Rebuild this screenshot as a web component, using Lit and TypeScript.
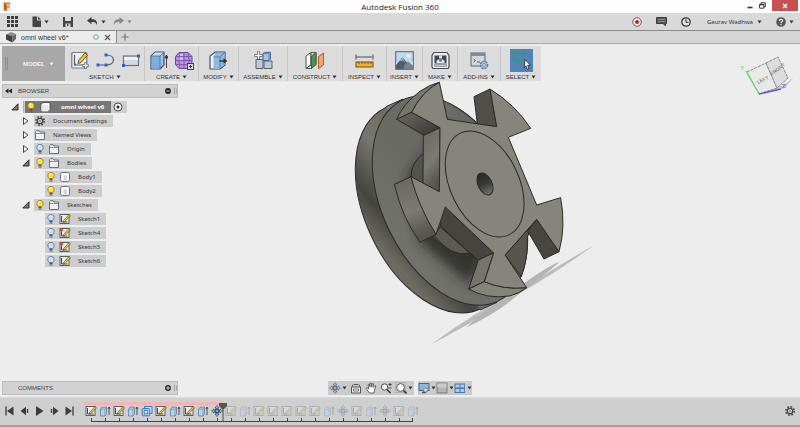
import { LitElement, html, css, svg, nothing, TemplateResult } from "lit";
import { customElement, property } from "lit/decorators.js";
import { classMap } from "lit/directives/class-map.js";

type Glyph = { w: number; h: number; art: TemplateResult };

const sketchSmall = svg`<rect x="1" y="1.500" width="9" height="9" fill="#e9eef3" stroke="#59626b"/><path d="M2.500 3v6h6" fill="none" stroke="#3c4c60"/><path d="M4.500 7.500L10 1.500l1.500 1.300L6 8.500 4 9z" fill="#f3bd2c" stroke="#54431a" stroke-width="0.600"/>`;

const extrudeSmall = svg`<path d="M1.500 4.200l1.500-2h4.500v7L6 11H1.500z" fill="#b7d2ee" stroke="#5f7fa3" stroke-width="0.800"/><path d="M1.500 4.200H6V11M6 4.200l1.500-2" fill="none" stroke="#5f7fa3" stroke-width="0.600"/><path d="M10 10V2.500M9 4l1-2 1 2" fill="none" stroke="#444" stroke-width="0.900"/>`;

const moveSmall = (line: string, core: string) => svg`<path d="M6 .500l2 2.500H4zM6 11.500L4 9h4zM.500 6L3 4v4zM11.500 6L9 8V4z" fill="#e6eef7" stroke="${line}" stroke-width="0.800"/><path d="M6 3v6M3 6h6" stroke="${line}" stroke-width="0.800"/><rect x="4.300" y="4.300" width="3.400" height="3.400" fill="${core}" stroke="${line}" stroke-width="0.800"/>`;

const bulb = (fill: string, line: string) => svg`<path d="M4.200 7.500C2 5.500 2.500 1.500 6 1.500s4 4 1.800 6z" fill="${fill}" stroke="${line}" stroke-width="0.900"/><path d="M4.500 8.500h3M4.500 10h3" stroke="#555" stroke-width="1"/><path d="M4.500 4q.300-1.300 1.400-1.500" stroke="#fff" fill="none" stroke-width="0.800"/>`;

const glyphs: Record<string, Glyph> = {
  logo: { w: 9, h: 9, art: svg`<rect width="9" height="9" fill="#d4e9f2"/><path d="M2 .500h6v2H4.500v1.300h3v2h-3V9H2z" fill="#e88a1d"/><path d="M2 .500l2.500 2V9L2 7z" fill="#b65d12"/>` },
  grid: { w: 11, h: 11, art: svg`${[0, 4, 8].map(y => [0, 4, 8].map(x => svg`<rect x="${x}" y="${y}" width="3" height="3" fill="#3e3e3e"/>`))}` },
  file: { w: 9, h: 11, art: svg`<path d="M.500.500H5v4h4V11H.500z" fill="#444"/><path d="M6 .500L9 3.500H6z" fill="#444"/>` },
  save: { w: 10, h: 11, art: svg`<path d="M0 1h10v10H0z" fill="#444"/><path d="M2 1h6v4H2zM2.500 7.500h5V11h-5z" fill="#d9d9d9"/><path d="M4 8h1.500v2H4z" fill="#444"/>` },
  undo: { w: 11, h: 9, art: svg`<path d="M0 3.500L4.500 0v2.300C8.500 2.300 10.500 4 10 8 9 5.500 7.500 5 4.500 5v2.200z" fill="#3f3f3f"/>` },
  redo: { w: 11, h: 9, art: svg`<path d="M11 3.500L6.500 0v2.300C2.500 2.300.500 4 1 8 2 5.500 3.500 5 6.500 5v2.200z" fill="#888"/>` },
  record: { w: 10, h: 10, art: svg`<circle cx="5" cy="5" r="4.200" fill="#fff" stroke="#444" stroke-width="0.900"/><circle cx="5" cy="5" r="2" fill="#e01010"/>` },
  chat: { w: 11, h: 9, art: svg`<path d="M.500.500h10v6h-1v2.300L7 6.500H.500z" fill="#555" stroke="#3d3d3d"/><path d="M2 2.500h7M2 4.500h7" stroke="#999" stroke-width="0.800"/>` },
  clock: { w: 10, h: 10, art: svg`<circle cx="5" cy="5" r="4.200" fill="#e4e4e4" stroke="#3b3b3b" stroke-width="1.300"/><path d="M5 2.200V5.300h2.500" fill="none" stroke="#333"/>` },
  help: { w: 10, h: 10, art: svg`<circle cx="5" cy="5" r="4.800" fill="#555"/><path d="M3.400 4C3.400 1.800 6.600 1.800 6.600 3.800 6.600 4.900 5 4.900 5 6.200M5 7v1.200" fill="none" stroke="#eee" stroke-width="1.200"/>` },
  cube: { w: 10, h: 11, art: svg`<path d="M0 2.500L5 0l5 2-3.500 2z" fill="#8b8b8b"/><path d="M0 2.500L6.500 4v6.500L0 7.500z" fill="#404040"/><path d="M6.500 4L10 2v5l-3.500 3.500z" fill="#666"/>` },
  ring: { w: 6, h: 6, art: svg`<circle cx="3" cy="3" r="2.300" fill="none" stroke="#55b8ac"/>` },
  close: { w: 7, h: 7, art: svg`<path d="M1 1l5 5M6 1L1 6" stroke="#555" stroke-width="1.200"/>` },
  closeWhite: { w: 6, h: 6, art: svg`<path d="M1 1l4 4M5 1L1 5" stroke="#fff" stroke-width="1.400"/>` },
  plus: { w: 8, h: 8, art: svg`<path d="M4 .500v7M.500 4h7" stroke="#777" stroke-width="1.200"/>` },
  minimise: { w: 6, h: 6, art: svg`<path d="M.500 4.500h5" stroke="#333" stroke-width="1.600"/>` },
  restore: { w: 7, h: 7, art: svg`<path d="M2 2V.800h4.300v4H5" fill="none" stroke="#333"/><path d="M.600 2.500h4.200v3.700H.600z" fill="none" stroke="#333"/><path d="M.500 2.600h4.500" stroke="#333" stroke-width="1.400"/>` },
  caret: { w: 5, h: 4, art: svg`<path d="M.500.500h4L2.500 3.500z" fill="currentColor"/>` },
  sketch: { w: 18, h: 19, art: svg`<rect x=".800" y="1.500" width="15" height="15.500" rx="1" fill="#eef1f5" stroke="#737b86" stroke-width="1.200"/><path d="M3.500 4v10h10" fill="none" stroke="#555f6c" stroke-width="1.200"/><path d="M3 14.500h2v-2H3z" fill="#2c70c8"/><path d="M7.500 9.500L14 2l2.500 2.200L10 11.500 7 12.500z" fill="#f2c335" stroke="#57481d" stroke-width="0.900"/><path d="M14.500 11.500v6M11.500 14.500h6" stroke="#555" stroke-width="3"/><path d="M14.500 12v5M12 14.500h5" stroke="#f5f5f5" stroke-width="1.400"/>` },
  line: { w: 19, h: 14, art: svg`<path d="M2 12h8M10 2c10 0 10 10 0 10" fill="none" stroke="#555b63" stroke-width="1.200"/><path d="M.500 10.500h3v3h-3zM8.500 10.500h3v3h-3zM8.500.500h3v3h-3z" fill="#2566c6"/>` },
  rect: { w: 18, h: 13, art: svg`<rect x="1.500" y="2" width="15" height="9.500" fill="#d5d8de" stroke="#6b717a" stroke-width="1.200"/><path d="M2 3h14v3H2z" fill="#eff0f3"/><path d="M15 .500h3v3h-3zM0 10h3v3H0z" fill="#2566c6"/>` },
  extrude: { w: 18, h: 19, art: svg`<path d="M1 5l4-3.800h9V14l-4 4H1z" fill="#9dc3ea" stroke="#40546c" stroke-width="1.200" stroke-linejoin="round"/><path d="M1.500 5h8.500v12.500h-8.500z" fill="#7daee0"/><path d="M1.500 5L5 1.500h8.500L10 5z" fill="#c4ddf5"/><path d="M1 5h9v13M10 5l4-3.800" fill="none" stroke="#4f6b8b" stroke-width="0.800"/><path d="M16.500 17V5M15 7l1.500-3L18 7z" fill="#333" stroke="#333" stroke-width="0.900"/>` },
  form: { w: 19, h: 19, art: svg`<path d="M4 1.500h9l4 4v8l-4 4H4l-3.500-4v-8z" fill="#b892e0" stroke="#6b4494" stroke-linejoin="round"/><path d="M1 5.500h16M.500 9.500h16.500M1 13.500h16M5 1.500q-2 8 0 16M9 1.500v16M13 1.500q2 8 0 16" fill="none" stroke="#7d53aa" stroke-width="0.900"/><path d="M5 3h3v2H5zM4.500 6.500H8V9H4.500z" fill="#d8c1f2"/><rect x="12.500" y="12.500" width="6" height="6" fill="#ddd" stroke="#444"/><path d="M14 15.500h3M15.500 14v3" stroke="#333"/>` },
  modify: { w: 19, h: 19, art: svg`<path d="M1 5l5-3.800h10V14l-5 4H1z" fill="#eef1f4" stroke="#40546c" stroke-width="1.200" stroke-linejoin="round"/><path d="M4.500 6q0-3 4-4.500h7V14l-5 3.500h-6z" fill="#8fb9e5"/><path d="M4.500 6h6.500v11.500M11 6l4.500-4.500" stroke="#4c6a8c" fill="none" stroke-width="0.700"/><path d="M10.500 9.300h4v-2L18.500 10l-4 2.700v-2h-4z" fill="#333"/>` },
  assemble: { w: 19, h: 19, art: svg`<path d="M2 8.500h7v9H2zM10 10h8v7.500h-8z" fill="#bfc9d6" stroke="#59636f"/><path d="M9 2.500l1.500-1.200h6V8L15 9.500H9z" fill="#9ec3ea" stroke="#49678a"/><path d="M9.500 2.500h5.500v6.500" fill="none" stroke="#49678a" stroke-width="0.700"/><path d="M4.500.500v8M.500 4.500h8" stroke="#555" stroke-width="3"/><path d="M4.500 1v7M1 4.500h7" stroke="#fafafa" stroke-width="1.500"/>` },
  construct: { w: 20, h: 19, art: svg`<path d="M1 5l5-3.500V14L1 17.500z" fill="#f6f7f8" stroke="#555"/><path d="M6 1.500h5v12L6 17.500H1L6 14z" fill="#dee1e4" stroke="#555"/><path d="M6.500 5L11 1.500V13.500L6.500 17.500z" fill="#4d9455" stroke="#37643c"/><path d="M13.500 5.500L18.500 2v12l-5 3.700z" fill="#ef9a64" stroke="#b95a2e"/><path d="M14 8l4-3M14 11l4-3M14 14l4-3" stroke="#f8cba9" stroke-width="0.800"/>` },
  inspect: { w: 19, h: 19, art: svg`<path d="M1.500 6h16M1 3.500v5M18 3.500v5" stroke="#4a4f56"/><rect x="1" y="11" width="17" height="5" fill="#f4af22" stroke="#6c531e"/><path d="M4 11v2M7 11v2M10 11v2M13 11v2M16 11v2" stroke="#6c531e" stroke-width="0.800"/>` },
  insert: { w: 19, h: 19, art: svg`<rect x=".700" y=".700" width="17.600" height="17.600" fill="#b8daf4" stroke="#566270"/><path d="M1 11h17v7H1z" fill="#d5dde2"/><circle cx="13.500" cy="5" r="2" fill="#fff0a4"/><path d="M1 14L7.500 6.500 18 18H1z" fill="#4f5d6b"/><path d="M9 14l4-3.500 5 4V18H9z" fill="#76828e"/><path d="M7.500 6.500L4 10.500l3.500-1 3 2.500z" fill="#9aa6b2"/>` },
  make: { w: 19, h: 19, art: svg`<path d="M3 1.500h13l2 3V16l-1 1.500H2L1 16V4.500z" fill="#eceef0" stroke="#464a50" stroke-width="1.200"/><rect x="3.500" y="4.500" width="12" height="8" fill="#41464d"/><path d="M8 4.500h3v3H8z" fill="#ddd"/><path d="M5.500 10l1.500-1.500h5l1.500 1.500v2h-8z" fill="#e4e8ec"/><path d="M8 8h3v2L9.500 11 8 10z" fill="#3c82e0"/><path d="M3.500 13.500h12v2h-12z" fill="#c5c8cc" stroke="#777" stroke-width="0.600"/>` },
  addins: { w: 19, h: 19, art: svg`<rect x="1" y="2" width="14" height="13" fill="#d2d8df" stroke="#5b6571"/><path d="M1 2h14v3H1z" fill="#7e8a97"/><path d="M3.500 8l2 1.500-2 1.500M7 11h3" fill="none" stroke="#445555" stroke-width="0.900"/><circle cx="14" cy="14" r="3.600" fill="#a9c6e4" stroke="#4f74a0" stroke-width="1.400" stroke-dasharray="2 1"/><circle cx="14" cy="14" r="1.400" fill="#eef" stroke="#4f74a0" stroke-width="0.700"/>` },
  select: { w: 23, h: 23, art: svg`<rect width="23" height="23" fill="#4f84b8"/><rect x="3" y="3.500" width="12" height="8" fill="none" stroke="#3f9450" stroke-dasharray="2 1"/><path d="M15 10.500l5.500 5.800h-3l1.500 3.300-1.600.700-1.400-3.300-1.800 1.800z" fill="#fff" stroke="#222" stroke-width="0.800"/>` },
  rewind: { w: 7, h: 6, art: svg`<path d="M3.500.500v5L0 3zM7 .500v5L3.500 3z" fill="#222"/>` },
  minusDot: { w: 6, h: 6, art: svg`<circle cx="3" cy="3" r="2.900" fill="#222"/><path d="M1.500 3h3" stroke="#ddd"/>` },
  plusDot: { w: 6, h: 6, art: svg`<circle cx="3" cy="3" r="2.900" fill="#222"/><path d="M1.200 3h3.600M3 1.200v3.600" stroke="#ddd"/>` },
  grip: { w: 3, h: 8, art: svg`<path d="M.500.500v7M2.500 1.500v5" stroke="#999" stroke-width="0.800"/>` },
  open: { w: 8, h: 8, art: svg`<path d="M7 .800V7H.800z" fill="#777" stroke="#222" stroke-width="0.900"/>` },
  shut: { w: 8, h: 8, art: svg`<path d="M1.500.600L6 4 1.500 7.400z" fill="#fff" stroke="#333" stroke-width="0.900"/>` },
  bulbOn: { w: 12, h: 12, art: bulb("#ffe13c", "#9a7c1c") },
  bulbOff: { w: 12, h: 12, art: bulb("#c8e0f8", "#56789c") },
  body: { w: 12, h: 12, art: svg`<rect x="1.500" y="1.500" width="9" height="9" rx="2" fill="#fff" stroke="#6d7278"/><path d="M4.500 4.500h3.500V9H4.500z" fill="#cfd3da"/>` },
  comp: { w: 12, h: 12, art: svg`<path d="M2 3.500L4 1.500h7v7l-2 2H2z" fill="#fff" stroke="#555"/><path d="M2.500 4H9v6.500H2.500z" fill="#e6e8ea"/>` },
  gear: { w: 12, h: 12, art: svg`<circle cx="6" cy="6" r="4.200" fill="none" stroke="#444" stroke-width="1.600" stroke-dasharray="1.700 1.600"/><circle cx="6" cy="6" r="2.700" fill="#ddd" stroke="#444" stroke-width="1.300"/><circle cx="6" cy="6" r=".800" fill="#444"/>` },
  folder: { w: 12, h: 12, art: svg`<path d="M1.500 10.500v-8l1-.800h2.700L6 3h4.500v7.500z" fill="#eceff3" stroke="#5d656f" stroke-width="0.900"/><path d="M2 4.500h8.500" stroke="#5d656f" stroke-width="0.700"/>` },
  skA: { w: 12, h: 12, art: sketchSmall },
  skB: { w: 12, h: 12, art: svg`${sketchSmall}<path d="M1 1l3.500 1.500L3 5 1 4z" fill="#d9492e"/>` },
  ext: { w: 12, h: 12, art: extrudeSmall },
  shell: { w: 12, h: 12, art: svg`<path d="M3.500 3.500v-2H11v7H9" fill="#c9e0f7" stroke="#3e78bd"/><rect x="1.200" y="3.500" width="7.500" height="7.300" rx="1" fill="#a5cbf0" stroke="#3e78bd"/><rect x="3.300" y="5.500" width="3.300" height="3.300" fill="#eaf3fc" stroke="#3e78bd" stroke-width="0.800"/>` },
  move: { w: 12, h: 12, art: moveSmall("#24405f", "#6e9fd6") },
  orbit: { w: 12, h: 12, art: moveSmall("#5a6470", "#8db4e0") },
  radio: { w: 10, h: 10, art: svg`<circle cx="5" cy="5" r="4" fill="#fff" stroke="#333" stroke-width="0.900"/><circle cx="5" cy="5" r="1.500" fill="#222"/>` },
  look: { w: 12, h: 12, art: svg`<path d="M1.500 5h9v6h-9z" fill="#eee" stroke="#555"/><path d="M2 5l1-2.500M10 5L9 2.500M4 2.500h4" stroke="#555"/><path d="M3.500 7h5v2h-5z" fill="#fff" stroke="#555" stroke-width="0.800"/>` },
  hand: { w: 12, h: 12, art: svg`<path d="M4.500 11L1 6.500l1-.800L3.800 7 3 2.500l1-.300L5 5V1h1.200l.300 4L7.500 1.500l1 .300L8.200 5.500 10 3.500l.800.500L9.500 8 9 11z" fill="#fff" stroke="#444" stroke-width="0.800"/>` },
  zoom: { w: 12, h: 12, art: svg`<circle cx="4.500" cy="5" r="3.200" fill="#eef4fa" stroke="#555"/><path d="M7 7.500l3.500 3.500" stroke="#333" stroke-width="1.600"/><path d="M10 1v3M8.500 2.500h3M8.500 6h3" stroke="#222" stroke-width="0.800"/>` },
  zoomWin: { w: 12, h: 12, art: svg`<path d="M.500.500h10v10h-10z" fill="none" stroke="#999" stroke-dasharray="1 1"/><circle cx="5.500" cy="5.500" r="3.900" fill="#fff" stroke="#555"/><path d="M8.500 8.500l3 3" stroke="#333" stroke-width="1.600"/>` },
  display: { w: 12, h: 12, art: svg`<rect x="1" y="1.500" width="10" height="7" fill="#8db7e4" stroke="#50657d"/><path d="M4 10.500h4M6 9v2" stroke="#555" stroke-width="1.400"/><ellipse cx="7.500" cy="8" rx="2.500" ry="2" fill="#ccd7e4" stroke="#666677" stroke-width="0.700"/>` },
  shade: { w: 12, h: 12, art: svg`<rect x="1" y="1" width="10" height="10" fill="#b5b5b5" stroke="#7b7b7b"/><path d="M1.500 1.500h9v4h-9z" fill="#ccc"/>` },
  views: { w: 12, h: 12, art: svg`<path d="M.500 1.500H11v9.500H.500z" fill="#4a76aa"/><path d="M1.500 2.500h4v3h-4zM6.500 2.500h3.700v3H6.500zM1.500 7h4v3h-4zM6.500 7h3.700v3H6.500z" fill="#a6cdf2"/>` },
  toStart: { w: 9, h: 10, art: svg`<path d="M8.500.500v9L2 5z" fill="#3c3c3c"/><path d="M1 .500v9" stroke="#3c3c3c" stroke-width="1.300"/>` },
  back: { w: 9, h: 10, art: svg`<path d="M6 .800v8.400L.500 5z" fill="#3c3c3c"/><path d="M7.500 3v4" stroke="#3c3c3c" stroke-width="1.300"/>` },
  play: { w: 9, h: 10, art: svg`<path d="M1 0l7.500 5L1 10z" fill="#3c3c3c"/>` },
  next: { w: 9, h: 10, art: svg`<path d="M3 .800v8.400L8.500 5z" fill="#3c3c3c"/><path d="M1.500 3v4" stroke="#3c3c3c" stroke-width="1.300"/>` },
  toEnd: { w: 9, h: 10, art: svg`<path d="M.500.500v9L7 5z" fill="#3c3c3c"/><path d="M8 .500v9" stroke="#3c3c3c" stroke-width="1.300"/>` },
  marker: { w: 8, h: 18, art: svg`<path d="M0 0h8v3L5 6H3L0 3z" fill="#555"/><path d="M4 5v13" stroke="#444"/>` },
};

const icon = (name: string) => {
  const g = glyphs[name];
  return html`<svg class="icon" width=${g.w} height=${g.h} viewBox="0 0 ${g.w} ${g.h}" aria-hidden="true">${g.art}</svg>`;
};

const base = css`
  * { box-sizing: border-box; }
  button {
    display: inline-flex; align-items: center; gap: 3px;
    margin: 0; padding: 0; border: 0; background: none;
    font: inherit; color: inherit; white-space: nowrap;
  }
  .icon { display: block; flex: none; }
`;

@customElement("wheel-model")
export class WheelModel extends LitElement {
  static styles = css`
    :host { display: block; }
    svg { display: block; width: 260px; height: 270px; }
    .edge { stroke: #2a2a27; stroke-width: 3; stroke-linejoin: round; }
    .line { fill: none; }
  `;
  render() {
    return html`<svg viewBox="0 0 780 810" role="img" aria-label="Omni wheel">
      <defs>
        <linearGradient id="rim" x1="0" y1="0" x2="0.500" y2="1">
          <stop offset="0" stop-color="#8c8b82"/><stop offset=".3" stop-color="#67665e"/>
          <stop offset=".6" stop-color="#77776f"/><stop offset=".85" stop-color="#45453f"/><stop offset="1" stop-color="#6b6b62"/>
        </linearGradient>
        <linearGradient id="plate" gradientUnits="userSpaceOnUse" x1="240" y1="60" x2="400" y2="700">
          <stop offset="0" stop-color="#464643"/><stop offset=".25" stop-color="#6e6e69"/>
          <stop offset=".5" stop-color="#6a6a65"/><stop offset=".8" stop-color="#72726c"/><stop offset="1" stop-color="#5e5e58"/>
        </linearGradient>
        <linearGradient id="side" x1="0" y1="0" x2="0.300" y2="1">
          <stop offset="0" stop-color="#66665f"/><stop offset=".6" stop-color="#7b7b73"/><stop offset="1" stop-color="#56564f"/>
        </linearGradient>
        <linearGradient id="under" x1="0" y1="0" x2="1" y2="1">
          <stop offset="0" stop-color="#6e6c64"/><stop offset="1" stop-color="#34332f"/>
        </linearGradient>
        <linearGradient id="bore" x1="0" y1="0" x2="1" y2="0">
          <stop offset="0" stop-color="#272725"/><stop offset=".5" stop-color="#393936"/><stop offset="1" stop-color="#77766e"/>
        </linearGradient>
        <filter id="soft" x="-30%" y="-30%" width="160%" height="160%"><feGaussianBlur stdDeviation="18"/></filter>
        <clipPath id="disc"><ellipse cx="330" cy="377" rx="334" ry="203" transform="rotate(64.500 330 377)"/></clipPath>
      </defs>
      <path d="M275 807Q420 700 560 632Q700 545 762 511Q660 585 540 655Q440 720 275 807z" fill="#bcbcbc"/>
      <path d="M380 757Q420 715 530 640Q620 575 658 560Q640 580 540 655Q470 715 380 757z" fill="#b4b4b4"/>
      <g fill="url(#rim)">
        <ellipse class="edge" cx="279" cy="400" rx="334" ry="203" transform="rotate(64.500 279 400)"/>
        <path d="M138 95L189 72L471 682L420 705z"/>
        <path class="edge line" d="M138 95L189 72M420 705L471 682"/>
      </g>
      <ellipse class="edge" cx="330" cy="377" rx="334" ry="203" transform="rotate(64.500 330 377)" fill="url(#plate)"/>
      <g clip-path="url(#disc)">
        <path d="M200 130L290 170L245 250Q200 290 200 340L240 500L390 630L430 560L520 420L330 150z" fill="#22221f" opacity=".75" filter="url(#soft)"/>
      </g>
      <path class="edge" d="M252 234Q212 262 213 310L220 390Q260 490 330 525Q360 540 392 533L420 500L300 230z" fill="#53534e"/>
      <path class="edge" d="M300 455L415 557L386 535Q330 545 284 482z" fill="#5b5b54"/>
      <path class="edge" d="M250 172L300 158L298 350L249 326z" fill="url(#side)"/>
      <path class="edge" d="M298 22Q270 28 240 49Q190 85 170 133L215 112Q245 50 298 22z" fill="#77766d"/>
      <path class="edge" d="M215 112L300 158L252 181L170 133z" fill="url(#under)"/>
      <path class="edge" d="M213 305L163 328Q185 425 240 502L288 478Q240 400 213 305z" fill="url(#side)"/>
      <path class="edge" d="M316 396L461 534L415 557L302 453L300 430z" fill="#45443f"/>
      <path class="edge" d="M461 534L415 555L386 642L433 620z" fill="#76756c"/>
      <path class="edge" d="M386 642Q440 673 508 663Q540 655 560 638Q490 645 433 620z" fill="#85847a"/>
      <path class="edge" d="M495 540L590 433L562 485Q565 550 544 605z" fill="#56564f"/>
      <path class="edge" d="M590 433L563 468L612 552L657 530z" fill="#47463f"/>
      <path class="edge" d="M450 42L402 65L412 147L470 155z" fill="#504f49"/>
      <path class="edge" fill="#86857b" d="M298 22L322 133L470 155L450 42Q525 88 572 160L505 187L590 390L662 368Q678 455 657 530L590 433L495 540L560 638Q490 645 433 620L461 534L316 396L288 478Q235 395 213 305L298 350L300 158L215 112Q245 50 298 22z"/>
      <ellipse class="edge line" cx="434" cy="327" rx="169" ry="103" transform="rotate(64.500 434 327)"/>
      <ellipse class="edge" cx="435" cy="327" rx="35" ry="21" transform="rotate(64.500 435 327)" fill="url(#bore)"/>
    </svg>`;
  }
}

@customElement("view-cube")
export class ViewCube extends LitElement {
  static styles = css`
    :host { display: block; }
    svg { display: block; width: 60px; height: 50px; }
    text { font-family: "Liberation Sans", Arial, sans-serif; font-size: 5px; fill: #666; }
    .axis { font-size: 6px; font-weight: 700; }
    .up { fill: #6fea6f; }
    .deep { fill: #6c6ce8; }
    .face { stroke: #888; stroke-width: 1; stroke-dasharray: 3 1; }
  `;
  render() {
    return html`<svg viewBox="0 0 60 50" role="img" aria-label="View cube">
      <path d="M17 46L48 32l9-7-9 11-27 8z" fill="#c8c8c8"/>
      <path class="face" d="M10 20L29 11l11 25-18 6z" fill="#e9e9e9"/>
      <path class="face" d="M29 11l12-6 10 21-11 10z" fill="#dcdcdc"/>
      <text transform="translate(21 32) rotate(-24)">LEFT</text>
      <text transform="translate(35 24) rotate(-38)">FRONT</text>
      <path d="M22 42L9 19" stroke="#5be65b" stroke-width="1.400"/>
      <path d="M22 42l22-5" stroke="#5656d8" stroke-width="1.400"/>
      <text class="axis up" x="3" y="18">Y</text>
      <text class="axis deep" x="45" y="36">Z</text>
    </svg>`;
  }
}

@customElement("tool-bar")
export class ToolBar extends LitElement {
  static styles = [base, css`
    :host {
      display: grid; grid-template-columns: 63px 79px 54px 40px 49px 55px 44px 36px 35px 43px 41px;
      height: 35px; background: #dcdcdc; color: #444; font-size: 6px;
    }
    .mode { background: #a8a8a8; color: #f4f4f4; font-weight: 700; justify-content: flex-start; gap: 15px; padding-left: 3px; }
    .mode .label { display: flex; align-items: center; gap: 4px; }
    .bars { width: 3px; height: 13px; border: solid #8c8c8c; border-width: 0 1px; }
    .group { display: flex; flex-direction: column; align-items: center; padding-top: 2px; border-left: 1px solid #c6c6c6; }
    .group.first { border-left-color: #dcdcdc; }
    .tools { display: flex; align-items: center; justify-content: center; gap: 7px; height: 24px; }
    .menu { height: 9px; gap: 2px; color: #333; }
  `];
  groups: [string, string[]][] = [
    ["SKETCH", ["sketch", "line", "rect"]], ["CREATE", ["extrude", "form"]], ["MODIFY", ["modify"]],
    ["ASSEMBLE", ["assemble"]], ["CONSTRUCT", ["construct"]], ["INSPECT", ["inspect"]], ["INSERT", ["insert"]],
    ["MAKE", ["make"]], ["ADD-INS", ["addins"]], ["SELECT", ["select"]],
  ];
  render() {
    return html`
      <button class="mode"><span class="bars"></span><span class="label">MODEL ${icon("caret")}</span></button>
      ${this.groups.map(([name, tools], i) => html`
        <div class=${classMap({ group: true, first: i === 0 })}>
          <div class="tools">${tools.map(t => html`<button aria-label=${t}>${icon(t)}</button>`)}</div>
          <button class="menu">${name}${icon("caret")}</button>
        </div>`)}`;
  }
}

interface Item { depth: number; icons: string[]; name: string; fold?: "open" | "shut"; }

@customElement("model-browser")
export class ModelBrowser extends LitElement {
  static styles = [base, css`
    :host { display: block; }
    .tree { list-style: none; margin: 3px 0 0; padding: 0; display: flex; flex-direction: column; gap: 2px; color: #333; font-family: "Noto Sans", "Open Sans", sans-serif; font-size: 6px; }
    .row { display: flex; align-items: center; height: 12px; gap: 3px; }
    .d0 { padding-left: 9px; }
    .d1 { padding-left: 20px; }
    .d2 { padding-left: 31px; }
    .fold { width: 9px; height: 12px; }
    .chip { height: 12px; gap: 2px; padding-right: 6px; background: #cdcdcd; }
    .name { padding-left: 5px; }
    .root { display: flex; align-items: center; height: 12px; padding: 0 4px 0 1px; gap: 2px; background: #cdcdcd; border-left: 1px solid #e0a090; }
    .root .chip { background: #777; color: #fff; font-weight: 700; padding-right: 7px; }
    .root .name { padding-left: 8px; }
  `];
  nodes: Item[] = [
    { depth: 1, fold: "shut", icons: ["gear"], name: "Document Settings" },
    { depth: 1, fold: "shut", icons: ["folder"], name: "Named Views" },
    { depth: 1, fold: "shut", icons: ["bulbOff", "folder"], name: "Origin" },
    { depth: 1, fold: "open", icons: ["bulbOn", "folder"], name: "Bodies" },
    { depth: 2, icons: ["bulbOn", "body"], name: "Body1" },
    { depth: 2, icons: ["bulbOn", "body"], name: "Body2" },
    { depth: 1, fold: "open", icons: ["bulbOn", "folder"], name: "Sketches" },
    { depth: 2, icons: ["bulbOff", "skA"], name: "Sketch1" },
    { depth: 2, icons: ["bulbOff", "skB"], name: "Sketch4" },
    { depth: 2, icons: ["bulbOff", "skB"], name: "Sketch5" },
    { depth: 2, icons: ["bulbOff", "skA"], name: "Sketch6" },
  ];
  render() {
    return html`<panel-head label="BROWSER" open></panel-head>
      <ul class="tree">
        <li class="row d0"><button class="fold" aria-label="Collapse">${icon("open")}</button>
          <span class="root"><button class="chip">${icon("bulbOn")}${icon("comp")}<span class="name">omni wheel v6</span></button><button aria-label="Activate">${icon("radio")}</button></span></li>
        ${this.nodes.map(n => html`<li class="row d${n.depth}">
          ${n.fold ? html`<button class="fold" aria-label="Toggle ${n.name}">${icon(n.fold)}</button>` : html`<span class="fold"></span>`}
          <button class="chip">${n.icons.map(icon)}<span class="name">${n.name}</span></button></li>`)}
      </ul>`;
  }
}

@customElement("panel-head")
export class PanelHead extends LitElement {
  @property() label = "";
  @property({ type: Boolean }) open = false;
  static styles = [base, css`
    :host { display: flex; align-items: center; width: 176px; height: 14px; gap: 6px; padding: 0 0 0 2px; background: #d2d2d2; border: 1px solid #bcbcbc; font-size: 6px; color: #444; }
    .lead { width: 7px; }
    .label { flex: 1; }
  `];
  render() {
    return html`<button class="lead" aria-label="Dock">${this.open ? icon("rewind") : nothing}</button>
      <span class="label">${this.label}</span>
      <button aria-label="Toggle ${this.label}">${icon(this.open ? "minusDot" : "plusDot")}${icon("grip")}</button>`;
  }
}

@customElement("time-line")
export class TimeLine extends LitElement {
  static styles = [base, css`
    :host { display: flex; align-items: flex-start; height: 30px; padding: 0 4px; background: #cfcfcf; border-top: 1px solid #dadada; border-bottom: 2px solid #a2a2a2; }
    .play { display: flex; gap: 6px; padding: 8px 0 0 1px; width: 80px; }
    .track { position: relative; display: flex; padding-top: 4px; }
    .step { display: flex; flex-direction: column; align-items: center; width: 14px; }
    .step::before { content: ""; width: 14px; height: 3px; }
    .done::before { background: #f6b5b5; }
    .future button { opacity: 0.3; }
    .tick { width: 14px; height: 5px; border-bottom: 1px solid #444; display: flex; justify-content: center; }
    .tick::before { content: ""; width: 1px; height: 3px; margin-top: 1px; background: #444; }
    .start .tick { width: 7px; align-self: flex-end; justify-content: flex-start; }
    .end .tick { width: 7px; align-self: flex-start; justify-content: flex-end; }
    .head { position: absolute; left: 135px; top: 5px; }
    .gear { margin: 7px 0 0 auto; }
  `];
  steps = "skA ext skA ext shell skA ext skA ext move skA ext skA skA skA skA skA ext move skA ext move skA ext".split(" ");
  render() {
    const last = this.steps.length - 1;
    return html`<div class="play">${["toStart", "back", "play", "next", "toEnd"].map(n => html`<button aria-label=${n}>${icon(n)}</button>`)}</div>
      <div class="track">${this.steps.map((s, i) => html`<div class=${classMap({ step: true, done: i < 10, future: i > 9, start: i === 0, end: i === last })}>
        <button aria-label="Step ${i + 1}">${icon(s)}</button><span class="tick"></span></div>`)}
        <span class="head">${icon("marker")}</span></div>
      <button class="gear" aria-label="Settings">${icon("gear")}</button>`;
  }
}

@customElement("app-root")
export class AppRoot extends LitElement {
  static styles = [base, css`
    :host { display: flex; flex-direction: column; min-height: 100vh; background: #ededed; color: #333; font-family: "Liberation Sans", Arial, sans-serif; font-size: 7px; line-height: 1; }
    .title { display: grid; grid-template-columns: 1fr auto 1fr; align-items: center; height: 13px; padding: 0 2px; background: #fdfdfd; }
    .title h1 { margin: 0; font: 400 8px/1 "Open Sans", "Noto Sans", sans-serif; color: #222; }
    .window { display: flex; justify-content: flex-end; align-self: start; align-items: center; gap: 6px; height: 11px; }
    .quit { justify-content: center; width: 26px; height: 11px; background: #c75050; }
    .bar { display: flex; align-items: center; height: 18px; padding: 0 6px 0 7px; background: #d9d9d9; border-bottom: 1px solid #8a8a8a; }
    .left { display: flex; align-items: center; gap: 14px; }
    .history { display: flex; gap: 7px; }
    .redo { color: #888; }
    .right { display: flex; align-items: center; gap: 14px; margin-left: auto; }
    .user { gap: 4px; margin-left: 2px; font-family: "Noto Sans", "Open Sans", sans-serif; font-size: 6px; }
    .tabs { display: flex; align-items: stretch; height: 13px; background: #d5d5d5; border-bottom: 1px solid #aaa; }
    .tab { display: flex; align-items: center; width: 117px; gap: 5px; padding: 0 5px 0 6px; background: #ececec; border-right: 1px solid #888; }
    .tab .name { flex: 1; }
    .new { padding-left: 4px; }
    .view { position: relative; flex: 1; display: flex; flex-direction: column; align-items: flex-start; padding: 2px; min-height: 340px; }
    .browser { margin-top: 3px; }
    .comments { margin-top: auto; }
    .model { position: absolute; left: calc(50% - 60px); top: 31px; }
    .compass { position: absolute; right: 3px; top: 8px; }
    .nav { position: absolute; left: 0; right: 0; bottom: 2px; display: flex; justify-content: center; gap: 4px; }
    .set { display: flex; align-items: center; height: 14px; gap: 3px; padding: 0 1px; background: #cbcbcb; }
    .tight { gap: 0; padding: 0; }
    .set button { gap: 1px; }
  `];
  render() {
    const drop = (n: string) => html`<button aria-label=${n}>${icon(n)}${icon("caret")}</button>`;
    const plain = (n: string) => html`<button aria-label=${n}>${icon(n)}</button>`;
    return html`
      <header class="title">${icon("logo")}<h1>Autodesk Fusion 360</h1>
        <div class="window">${plain("minimise")}${plain("restore")}<button class="quit" aria-label="Close">${icon("closeWhite")}</button></div></header>
      <nav class="bar">
        <div class="left">${plain("grid")}${drop("file")}${plain("save")}
          <div class="history">${drop("undo")}<button class="redo" aria-label="Redo">${icon("redo")}${icon("caret")}</button></div></div>
        <div class="right">${plain("record")}${plain("chat")}${plain("clock")}<button class="user">Gaurav Wadhwa ${icon("caret")}</button>${drop("help")}</div>
      </nav>
      <div class="tabs"><div class="tab">${icon("cube")}<span class="name">omni wheel v6*</span>${icon("ring")}<button aria-label="Close tab">${icon("close")}</button></div>
        <button class="new" aria-label="New tab">${icon("plus")}</button></div>
      <main class="view">
        <wheel-model class="model"></wheel-model>
        <tool-bar></tool-bar>
        <model-browser class="browser"></model-browser>
        <panel-head class="comments" label="COMMENTS"></panel-head>
        <view-cube class="compass"></view-cube>
        <div class="nav">
          <div class="set">${drop("orbit")}${plain("look")}${plain("hand")}${plain("zoom")}${drop("zoomWin")}</div>
          <div class="set tight">${drop("display")}${drop("shade")}${drop("views")}</div>
        </div>
      </main>
      <time-line></time-line>`;
  }
}
